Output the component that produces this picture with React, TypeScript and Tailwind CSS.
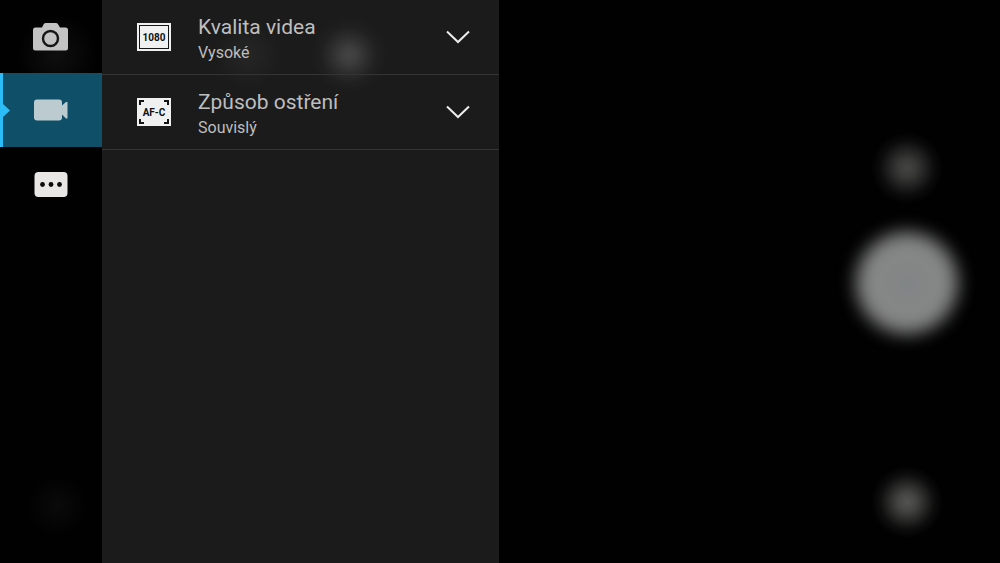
import React, { useState } from 'react';

type Tab = 'photo' | 'video' | 'more';

const CameraIcon: React.FC = () => (
  <svg width="36" height="30" viewBox="0 -1 36 30" aria-hidden="true">
    <path
      d="M2.500 5.500H9l1.800-3.600Q11.500 1 12.800 1H23q1.200 0 1.900.9L27 5.500h5.500Q35 5.500 35 8V26Q35 28.500 32.500 28.500H2.500Q0 28.500 0 26V8Q0 5.500 2.500 5.500z"
      fill="#c3c3c3"
    />
    <circle cx="17.500" cy="16.500" r="7.500" fill="none" stroke="#161616" strokeWidth="2.400" />
  </svg>
);

const VideoIcon: React.FC = () => (
  <svg width="34" height="22" viewBox="0 0 34 22" aria-hidden="true">
    <path
      d="M3 .5H25Q28 .5 28 3.500V6.500L32 3H33.500V19.500H32L28 15.500V18.500Q28 21.500 25 21.500H3Q0 21.500 0 18.500V3.500Q0 .5 3 .5z"
      fill="#bccbd0"
    />
  </svg>
);

const MoreIcon: React.FC = () => (
  <svg width="34" height="26" viewBox="0 0 34 26" aria-hidden="true">
    <rect x="0.500" y="1" width="33" height="25" rx="4" fill="#e8e7e6" />
    <circle cx="8.500" cy="13.500" r="2.400" fill="#0a0a0a" />
    <circle cx="17" cy="13.500" r="2.400" fill="#0a0a0a" />
    <circle cx="25.500" cy="13.500" r="2.400" fill="#0a0a0a" />
  </svg>
);

const ResolutionIcon: React.FC = () => (
  <svg width="34" height="28" viewBox="0 0 34 28" aria-hidden="true">
    <rect width="34" height="28" fill="#f0f0f0" />
    <rect x="2.500" y="2.500" width="29" height="23" fill="none" stroke="#151515" />
    <text x="17" y="18" textAnchor="middle" className="fill-[#111111] text-[10px] font-bold">
      1080
    </text>
  </svg>
);

const FocusIcon: React.FC = () => (
  <svg width="34" height="28" viewBox="0 0 34 28" aria-hidden="true">
    <rect width="34" height="28" fill="#f0f0f0" />
    <path d="M3 7V3H7M27 3H31V7M31 21V25H27M7 25H3V21" fill="none" stroke="#151515" strokeWidth="2" />
    <text x="17" y="18" textAnchor="middle" className="fill-[#111111] text-[10px] font-bold">
      AF-C
    </text>
  </svg>
);

const Chevron: React.FC = () => (
  <svg width="24" height="14" viewBox="0 0 24 14" aria-hidden="true">
    <path d="M1 1.500L12 12L23 1.500" fill="none" stroke="#ececec" strokeWidth="2" />
  </svg>
);

const tabs: { id: Tab; label: string; icon: React.ReactNode }[] = [
  { id: 'photo', label: 'Fotoaparát', icon: <CameraIcon /> },
  { id: 'video', label: 'Video', icon: <VideoIcon /> },
  { id: 'more', label: 'Další', icon: <MoreIcon /> },
];

const settings = [
  { title: 'Kvalita videa', value: 'Vysoké', icon: <ResolutionIcon /> },
  { title: 'Způsob ostření', value: 'Souvislý', icon: <FocusIcon /> },
];

const App: React.FC = () => {
  const [active, setActive] = useState<Tab>('video');

  return (
    <div className="flex min-h-screen bg-[#010102] font-['Roboto',sans-serif] text-[#bebebe]">
      <nav className="-mt-px flex w-[102px] shrink-0 flex-col bg-[radial-gradient(circle_at_57px_507px,#0a0a0a,transparent_30px),radial-gradient(circle_at_57px_56px,#0f0f0f,transparent_40px)]">
        {tabs.map((tab) => (
          <button
            key={tab.id}
            type="button"
            aria-label={tab.label}
            onClick={() => setActive(tab.id)}
            className={`relative flex h-[74px] items-center justify-center ${active === tab.id ? 'bg-[#0f5068]' : ''}`}
          >
            {active === tab.id && (
              <svg className="absolute left-0 top-0 h-full w-[10px]" viewBox="0 0 10 74" aria-hidden="true">
                <path d="M0 0H3V31L10 37.500L3 44V74H0z" fill="#2cbdf8" />
              </svg>
            )}
            {tab.icon}
          </button>
        ))}
      </nav>

      <main className="w-[397px] shrink-0 bg-[#1b1b1c] bg-[radial-gradient(circle_at_247px_55px,#444444_0px,#3d3d3d_8px,#2d2d2d_18px,#202020_28px,transparent_38px),radial-gradient(circle_at_146px_55px,#262626,transparent_34px)]">
        {settings.map((item) => (
          <button
            key={item.title}
            type="button"
            className="flex w-full items-center border-b border-[#343434] pb-[10px] pl-[35px] pr-[29px] text-left"
          >
            <span className="pt-[10px]">{item.icon}</span>
            <span className="ml-[27px] flex-1 pt-3">
              <span className="block text-[21px] leading-[30px]">{item.title}</span>
              <span className="block text-[16px] leading-[22px]">{item.value}</span>
            </span>
            <span className="pt-[10px]">
              <Chevron />
            </span>
          </button>
        ))}
      </main>

      <aside className="ml-auto flex w-[186px] flex-col items-center pt-[132px]">
        <button
          type="button"
          aria-label="Galerie"
          className="size-[72px] rounded-full bg-[radial-gradient(closest-side,#434341_0%,#383837_25%,#222222_50%,#0c0c0c_75%,transparent_100%)]"
        />
        <button
          type="button"
          aria-label="Spoušť"
          className="mt-[28px] size-[102px] rounded-full bg-[radial-gradient(closest-side,#7d8183_0%,#858787_35%,#858685_100%)] blur-[9px]"
        />
        <button
          type="button"
          aria-label="Režim"
          className="mt-[132px] size-[72px] rounded-full bg-[radial-gradient(closest-side,#535351_0%,#444443_25%,#292928_50%,#0e0e0e_75%,transparent_100%)]"
        />
      </aside>
    </div>
  );
};

export default App;
